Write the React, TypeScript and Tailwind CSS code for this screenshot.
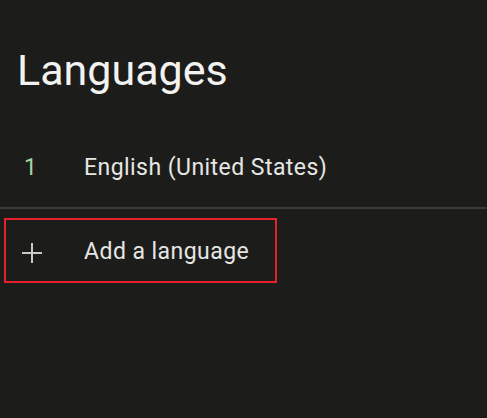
export default function App() {
  return (
    <div
      className="w-[487px] h-[418px] bg-[#1c1d1b] text-[#ececea] overflow-hidden"
      style={{ fontFamily: "Roboto, 'Noto Sans', sans-serif" }}
    >
      <h1 className="pl-[17px] pt-[40px] text-[43px] leading-[60px] font-normal text-[#f2f2f0]">Languages</h1>

      <div className="mt-[47px] flex items-center h-[42px]">
        <span className="w-[84px] pl-[24px] text-[23px] text-[#a6d4a0]">1</span>
        <span className="text-[23px] tracking-[0.45px] text-[#e6e6e4]">English (United States)</span>
      </div>

      <div className="mt-[18px] h-[2px] bg-[#3a3b39]" />

      <div className="mt-[9px] ml-[4px] w-[273px] h-[65px] border-2 border-[#e8202b] flex items-center pt-[4px]">
        <svg width="20" height="20" viewBox="0 0 20 20" className="ml-[16px] mr-[42px]">
          <path d="M10 0v20M0 10h20" stroke="#c9cac4" strokeWidth="2" />
        </svg>
        <span className="text-[23px] tracking-[0.45px] text-[#e6e6e4]">Add a language</span>
      </div>
    </div>
  );
}
